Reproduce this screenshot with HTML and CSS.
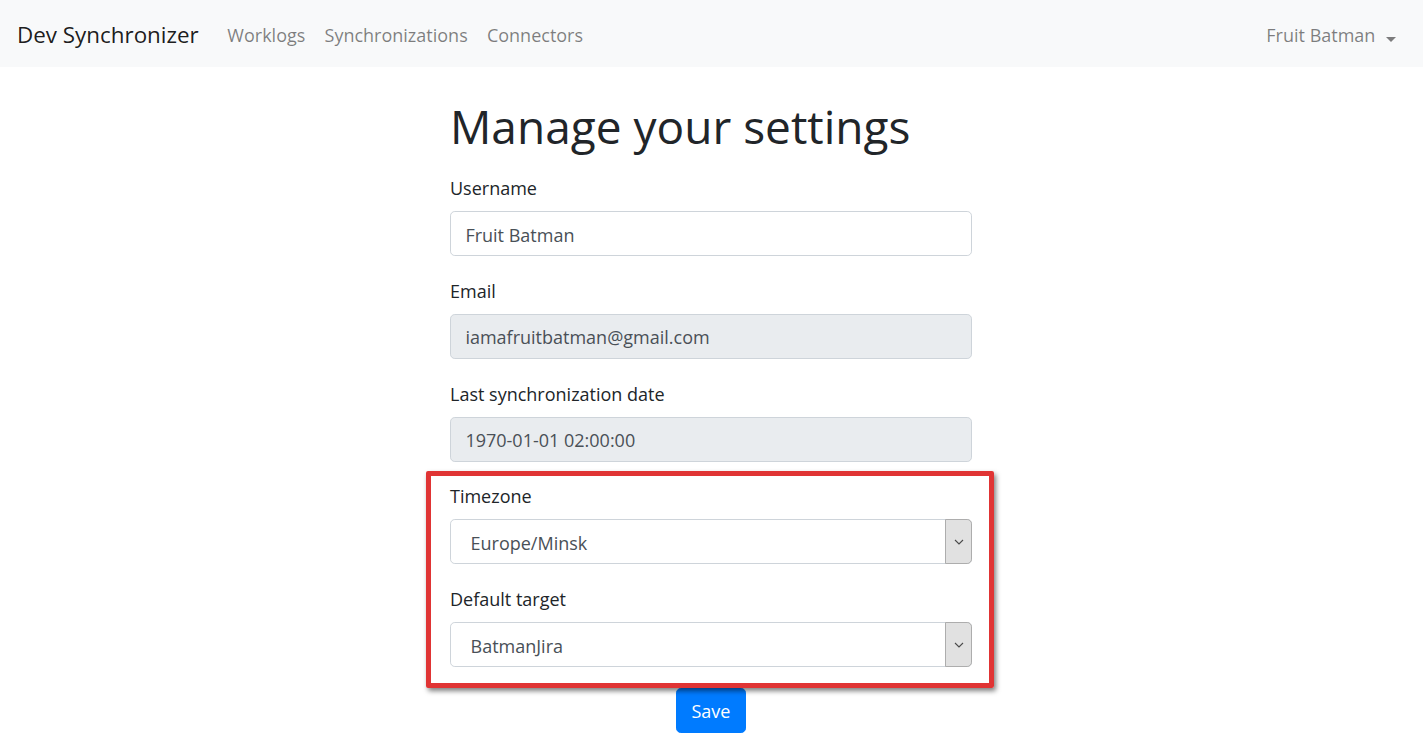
FILE: index.html
```html
<!DOCTYPE html>
<html lang="en">
<head>
<meta charset="utf-8">
<title>Dev Synchronizer - Settings</title>
<link rel="stylesheet" href="styles.css">
</head>
<body>
<nav class="navbar">
  <a class="brand" href="#">Dev Synchronizer</a>
  <ul class="nav-links">
    <li><a href="#">Worklogs</a></li>
    <li><a href="#">Synchronizations</a></li>
    <li><a href="#">Connectors</a></li>
  </ul>
  <div class="nav-user"><a href="#" class="dropdown-toggle">Fruit Batman<span class="caret"></span></a></div>
</nav>
<main class="main">
  <div class="column">
    <h1 class="title">Manage your settings</h1>
    <form class="form">
      <div class="form-group">
        <label class="label">Username</label>
        <input class="form-control" type="text" value="Fruit Batman">
      </div>
      <div class="form-group">
        <label class="label">Email</label>
        <input class="form-control" type="text" value="iamafruitbatman@gmail.com" readonly>
      </div>
      <div class="form-group">
        <label class="label">Last synchronization date</label>
        <input class="form-control" type="text" value="1970-01-01 02:00:00" readonly>
      </div>
      <div class="highlight">
        <div class="form-group">
          <label class="label">Timezone</label>
          <div class="select-box">
            <select class="select"><option>Europe/Minsk</option></select>
            <span class="select-arrow"><svg width="10" height="6" viewBox="0 0 10 6"><path d="M1 1 L5 5 L9 1" fill="none" stroke="#4a4a4a" stroke-width="1.1"/></svg></span>
          </div>
        </div>
        <div class="form-group">
          <label class="label">Default target</label>
          <div class="select-box">
            <select class="select"><option>BatmanJira</option></select>
            <span class="select-arrow"><svg width="10" height="6" viewBox="0 0 10 6"><path d="M1 1 L5 5 L9 1" fill="none" stroke="#4a4a4a" stroke-width="1.1"/></svg></span>
          </div>
        </div>
        <div class="red-frame"></div>
      </div>
      <div class="actions">
        <button type="button" class="btn">Save</button>
      </div>
    </form>
  </div>
</main>
</body>
</html>
```
FILE: styles.css
```css
* { box-sizing: border-box; }
html, body { margin: 0; padding: 0; }
body {
  font-family: "Open Sans", "Noto Sans", "Liberation Sans", sans-serif;
  font-size: 19.2px;
  line-height: 1.5;
  color: #212529;
  background: #fff;
}
a { text-decoration: none; }

.navbar {
  display: flex;
  align-items: center;
  height: 67px;
  padding: 3px 17px 0 17px;
  background: #f8f9fa;
}
.brand {
  font-size: 22.4px;
  line-height: 36px;
  color: rgba(0,0,0,.9);
  margin-right: 19px;
}
.nav-links {
  display: flex;
  list-style: none;
  margin: 0;
  padding: 0;
  flex: 1;
}
.nav-links a, .nav-user a {
  display: block;
  padding: 0 9.6px;
  color: rgba(0,0,0,.5);
  font-size: 18px;
  line-height: 28.8px;
}
.dropdown-toggle { display: flex; align-items: center; }
.caret {
  display: inline-block;
  margin-left: 11px;
  width: 0;
  height: 0;
  border-top: 5.8px solid rgba(0,0,0,.5);
  border-left: 5.6px solid transparent;
  border-right: 5.6px solid transparent;
}

.main { padding-top: 31px; }
.column {
  width: 522px;
  margin: 0 auto;
  position: relative;
  left: -0.5px;
}
.title {
  margin: 0 0 17px;
  font-size: 46px;
  font-weight: 400;
  line-height: 57.6px;
}
.form-group { margin-bottom: 19.2px; }
.label {
  display: block;
  height: 28.8px;
  padding-top: 1.5px;
  line-height: 28.8px;
  margin-bottom: 9.6px;
  font-size: 18px;
}
.form-control {
  display: block;
  width: 100%;
  height: 45.2px;
  padding: 2px 14.4px 0;
  font-family: inherit;
  font-size: 18px;
  color: #495057;
  background: #fff;
  border: 1px solid #ced4da;
  border-radius: 4.8px;
  outline: none;
}
.form-control[readonly] { background: #e9ecef; }

.highlight {
  position: relative;
  display: flow-root;
}
.red-frame {
  position: absolute;
  left: -24px;
  right: -22px;
  top: -10px;
  bottom: -1.4px;
  border: 5px solid #e03434;
  border-radius: 2px;
  box-shadow: 2px 3px 5px rgba(0,0,0,.5);
  pointer-events: none;
  z-index: 2;
}

.select-box {
  display: flex;
  height: 45.2px;
  border: 1px solid #ced4da;
  border-radius: 4.8px;
  background: #fff;
}
.select {
  flex: 1;
  appearance: none;
  -webkit-appearance: none;
  border: none;
  background: transparent;
  padding: 2px 19.5px 0;
  font-family: inherit;
  font-size: 18px;
  color: #495057;
  outline: none;
}
.select-arrow {
  width: 27px;
  margin: -1px -1px -1px 0;
  display: flex;
  align-items: center;
  justify-content: center;
  background: #e1e1e1;
  border: 1px solid #adadad;
  border-radius: 0 4.8px 4.8px 0;
}

.actions {
  text-align: center;
  padding-top: 1.4px;
}
.btn {
  height: 45.2px;
  padding: 2px 14.4px 0;
  font-family: inherit;
  font-size: 18px;
  color: #fff;
  background: #007bff;
  border: 1px solid #007bff;
  border-radius: 4.8px;
}
```
